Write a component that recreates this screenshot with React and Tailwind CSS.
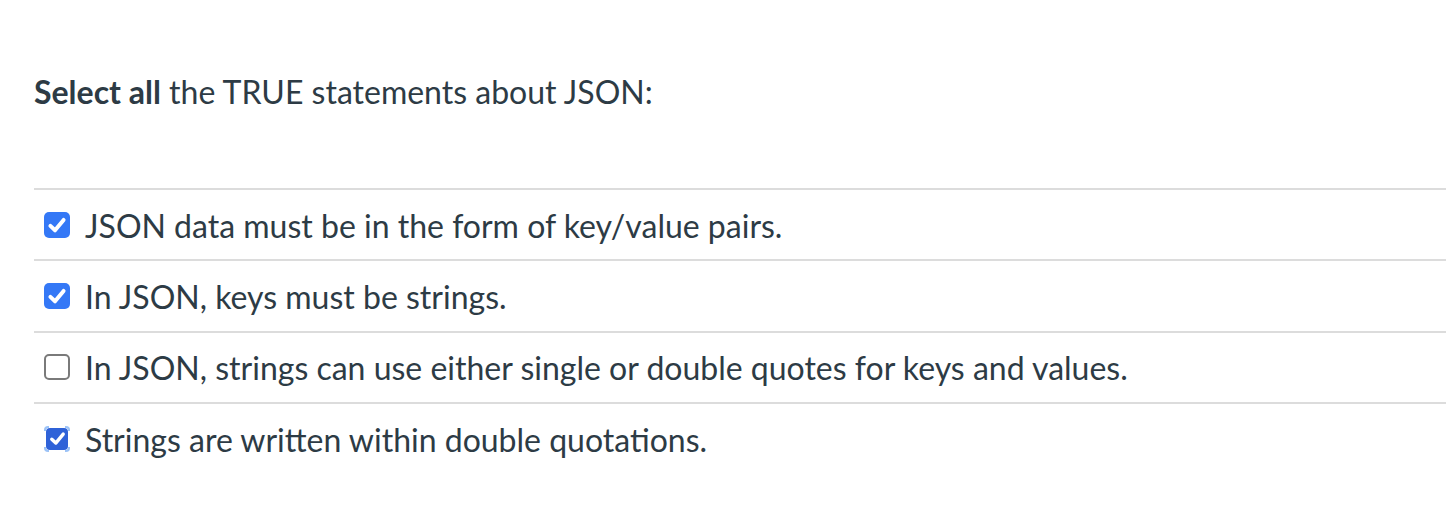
import React from "react";

const answers = [
  { text: "JSON data must be in the form of key/value pairs.", state: "checked" },
  { text: "In JSON, keys must be strings.", state: "checked" },
  { text: "In JSON, strings can use either single or double quotes for keys and values.", state: "empty" },
  { text: "Strings are written within double quotations.", state: "focused" },
];

function CheckMark({ size = 18 }) {
  return (
    <svg width={size} height={size} viewBox="0 0 20 20" fill="none">
      <path d="M4 10.8 L8.2 14.8 L16 5.4" stroke="white" strokeWidth="3.6" strokeLinecap="round" strokeLinejoin="round" />
    </svg>
  );
}

function Box({ state }) {
  if (state === "empty") {
    return <div className="w-[26px] h-[26px] rounded-[5px] border-2 border-[#7a7a7a] bg-white" />;
  }
  if (state === "focused") {
    return (
      <div className="relative w-[26px] h-[26px] flex items-center justify-center">
        <span className="absolute left-0 top-0 w-[5px] h-[5px] border-l-2 border-t-2 border-[#9cc3f7] rounded-tl-[4px]" />
        <span className="absolute right-0 top-0 w-[5px] h-[5px] border-r-2 border-t-2 border-[#9cc3f7] rounded-tr-[4px]" />
        <span className="absolute left-0 bottom-0 w-[5px] h-[5px] border-l-2 border-b-2 border-[#9cc3f7] rounded-bl-[4px]" />
        <span className="absolute right-0 bottom-0 w-[5px] h-[5px] border-r-2 border-b-2 border-[#9cc3f7] rounded-br-[4px]" />
        <div className="w-[22px] h-[22px] rounded-[4px] bg-[#2f62d8] flex items-center justify-center">
          <CheckMark size={19} />
        </div>
      </div>
    );
  }
  return (
    <div className="w-[26px] h-[26px] rounded-[5px] bg-[#3478f6] flex items-center justify-center">
      <CheckMark size={22} />
    </div>
  );
}

export default function App() {
  return (
    <div className="w-[1448px] h-[510px] bg-white pl-[34px] pr-[2px] pt-[71px] text-[#2d3b45] font-['Lato','Noto_Sans',sans-serif]">
      <p className="text-[32px] leading-[42px] mb-[75px]">
        <strong className="font-bold">Select all</strong> the TRUE statements about JSON:
      </p>
      <div>
        {answers.map((a) => (
          <div key={a.text} className="border-t-2 border-[#dcdcdc] h-[71.3px] flex items-center pl-[10px] gap-[15px]">
            <Box state={a.state} />
            <span className="text-[32px] leading-[40px] pt-[2px]">{a.text}</span>
          </div>
        ))}
      </div>
    </div>
  );
}
